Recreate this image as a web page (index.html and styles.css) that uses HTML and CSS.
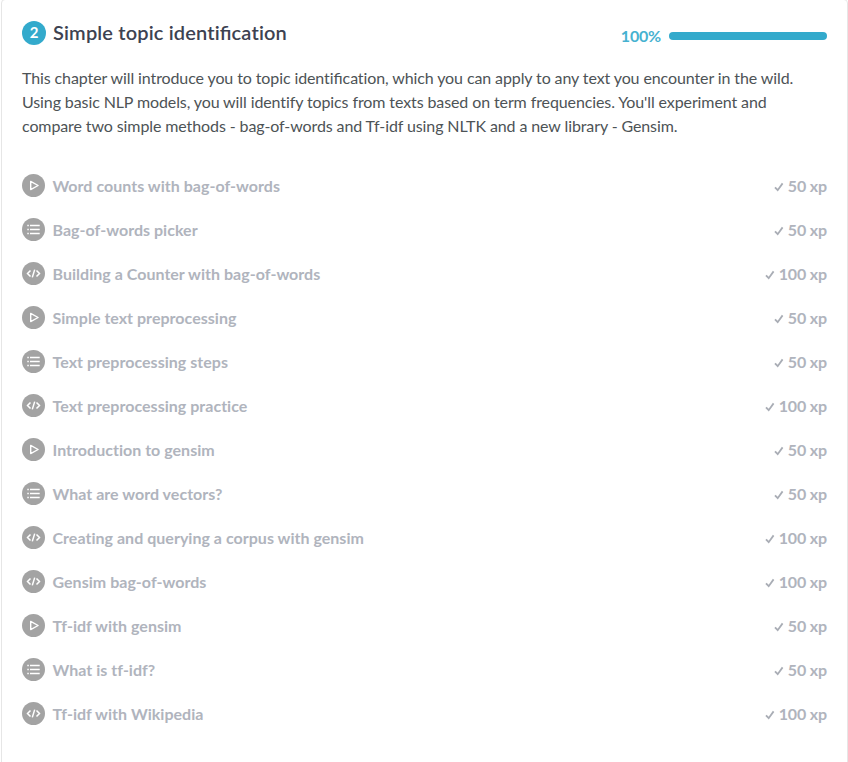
FILE: index.html
```
<!DOCTYPE html>
<html lang="en">
<head>
<meta charset="utf-8">
<title>Simple topic identification</title>
<link rel="stylesheet" href="styles.css">
</head>
<body>
<svg class="sprite" aria-hidden="true">
  <symbol id="video" viewBox="0 0 23 23"><circle cx="11.5" cy="11.5" r="11.5" fill="#a3a3a3"/><path d="M8.7 7.4v8.2l7.4-4.1z" fill="none" stroke="#fff" stroke-width="1.4" stroke-linejoin="round"/></symbol>
  <symbol id="choice" viewBox="0 0 23 23"><circle cx="11.5" cy="11.5" r="11.5" fill="#a3a3a3"/><path d="M5.3 7.5h1.5M5.3 11.5h1.5M5.3 15.5h1.5M8 7.5h9.7M8 11.5h9.7M8 15.5h9.7" stroke="#fff" stroke-width="1.3"/></symbol>
  <symbol id="code" viewBox="0 0 23 23"><circle cx="11.5" cy="11.5" r="11.5" fill="#a3a3a3"/><path d="M8.5 8.4l-3 3.1 3 3.1M14.5 8.4l3 3.1-3 3.1M12.7 7.6l-2.4 7.8" fill="none" stroke="#fff" stroke-width="1.5"/></symbol>
  <symbol id="check" viewBox="0 0 10 10"><path d="M1 5.3l2.7 2.9L8.6 1.4" fill="none" stroke="#a9adb5" stroke-width="1.8"/></symbol>
</svg>
<main class="chapter">
  <header class="chapter-header">
    <span class="number">2</span>
    <h1 class="title">Simple topic identi<span class="ligature">fi</span>cation</h1>
    <div class="progress"><span class="percent">100%</span><span class="bar"></span></div>
  </header>
  <p class="description">This chapter will introduce you to topic identi<span class="ligature">fi</span>cation, which you can apply to any text you encounter in the wild.<br>Using basic NLP models, you will identify topics from texts based on term frequencies. You'll experiment and<br>compare two simple methods - bag-of-words and Tf-idf using NLTK and a new library - Gensim.</p>
  <ul class="exercises">
    <li><svg class="icon"><use href="#video"/></svg><span class="name">Word counts with bag-of-words</span><svg class="check"><use href="#check"/></svg><span class="xp">50 xp</span></li>
    <li><svg class="icon"><use href="#choice"/></svg><span class="name">Bag-of-words picker</span><svg class="check"><use href="#check"/></svg><span class="xp">50 xp</span></li>
    <li><svg class="icon"><use href="#code"/></svg><span class="name">Building a Counter with bag-of-words</span><svg class="check"><use href="#check"/></svg><span class="xp">100 xp</span></li>
    <li><svg class="icon"><use href="#video"/></svg><span class="name">Simple text preprocessing</span><svg class="check"><use href="#check"/></svg><span class="xp">50 xp</span></li>
    <li><svg class="icon"><use href="#choice"/></svg><span class="name">Text preprocessing steps</span><svg class="check"><use href="#check"/></svg><span class="xp">50 xp</span></li>
    <li><svg class="icon"><use href="#code"/></svg><span class="name">Text preprocessing practice</span><svg class="check"><use href="#check"/></svg><span class="xp">100 xp</span></li>
    <li><svg class="icon"><use href="#video"/></svg><span class="name">Introduction to gensim</span><svg class="check"><use href="#check"/></svg><span class="xp">50 xp</span></li>
    <li><svg class="icon"><use href="#choice"/></svg><span class="name">What are word vectors?</span><svg class="check"><use href="#check"/></svg><span class="xp">50 xp</span></li>
    <li><svg class="icon"><use href="#code"/></svg><span class="name">Creating and querying a corpus with gensim</span><svg class="check"><use href="#check"/></svg><span class="xp">100 xp</span></li>
    <li><svg class="icon"><use href="#code"/></svg><span class="name">Gensim bag-of-words</span><svg class="check"><use href="#check"/></svg><span class="xp">100 xp</span></li>
    <li><svg class="icon"><use href="#video"/></svg><span class="name">Tf-idf with gensim</span><svg class="check"><use href="#check"/></svg><span class="xp">50 xp</span></li>
    <li><svg class="icon"><use href="#choice"/></svg><span class="name">What is tf-idf?</span><svg class="check"><use href="#check"/></svg><span class="xp">50 xp</span></li>
    <li><svg class="icon"><use href="#code"/></svg><span class="name">Tf-idf with Wikipedia</span><svg class="check"><use href="#check"/></svg><span class="xp">100 xp</span></li>
  </ul>
</main>
</body>
</html>
```
FILE: styles.css
```
* { box-sizing: border-box; }
html, body { height: 100%; }
body {
  margin: 0;
  background: #fff;
  font-family: Lato, "Liberation Sans", sans-serif;
  font-variant-ligatures: none;
  color: #4d5356;
  overflow: hidden;
}
.sprite { display: none; }
.ligature { font-variant-ligatures: common-ligatures; letter-spacing: 0; }
.chapter {
  height: 780px;
  margin: -1px 0 0 1px;
  padding: 20px 20px 0;
  border: 1px solid #e6e6e6;
  border-radius: 4px;
}
.chapter-header { display: flex; height: 26px; align-items: center; }
.number {
  width: 24px;
  height: 24px;
  border-radius: 50%;
  background: #33aacc;
  color: #fff;
  font-size: 15px;
  font-weight: 700;
  line-height: 23px;
  text-align: center;
}
.title {
  margin: -2px 0 0 7px;
  font-size: 20px;
  font-weight: 600;
  line-height: 26px;
  letter-spacing: .16px;
  color: #3d4251;
}
.progress { display: flex; align-items: center; margin: 6px 0 0 auto; }
.percent { font-size: 16px; font-weight: 700; line-height: 20px; letter-spacing: -.2px; color: #33aacc; opacity: .9; }
.bar { width: 158px; height: 8px; margin-left: 8px; border-radius: 4px; background: #33aacc; }
.description { margin: 20px 0 0; font-size: 16px; line-height: 24px; letter-spacing: -.105px; white-space: nowrap; }
.exercises { list-style: none; margin: 26px 0 0; padding: 0; }
.exercises li {
  display: flex;
  align-items: center;
  height: 44px;
  color: #b0b4bd;
  font-size: 16px;
  font-weight: 700;
  line-height: 24px;
}
.icon { width: 23px; height: 23px; margin: 0 7.5px 1px 0; }
.name { flex: 1; letter-spacing: .025px; }
.xp { letter-spacing: -.15px; }
.check { width: 10px; height: 10px; margin: 2px 3.5px 0 0; }
```
